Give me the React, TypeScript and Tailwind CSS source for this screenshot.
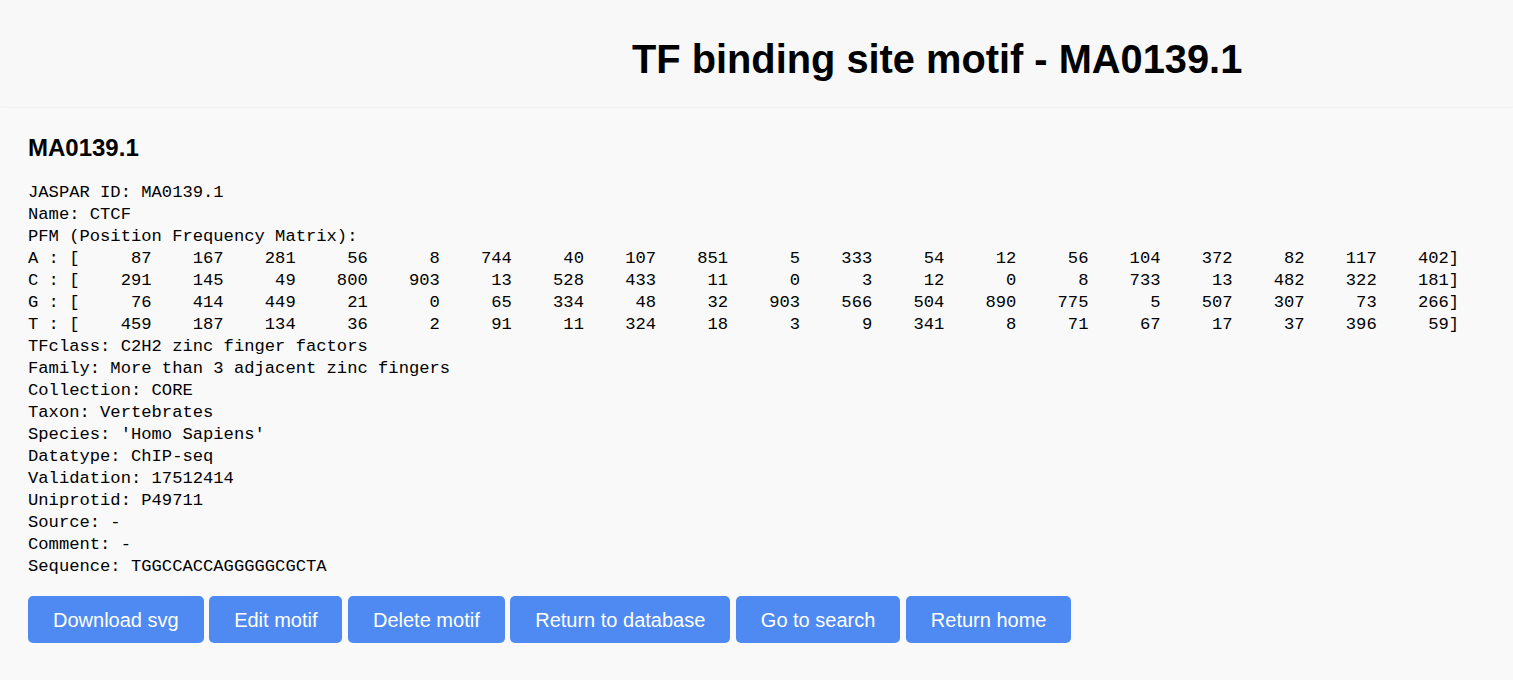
import React from "react";

const rows: [string, number[]][] = [
  ["A", [87, 167, 281, 56, 8, 744, 40, 107, 851, 5, 333, 54, 12, 56, 104, 372, 82, 117, 402]],
  ["C", [291, 145, 49, 800, 903, 13, 528, 433, 11, 0, 3, 12, 0, 8, 733, 13, 482, 322, 181]],
  ["G", [76, 414, 449, 21, 0, 65, 334, 48, 32, 903, 566, 504, 890, 775, 5, 507, 307, 73, 266]],
  ["T", [459, 187, 134, 36, 2, 91, 11, 324, 18, 3, 9, 341, 8, 71, 67, 17, 37, 396, 59]],
];

const before = ["JASPAR ID: MA0139.1", "Name: CTCF", "PFM (Position Frequency Matrix):"];
const after = [
  "TFclass: C2H2 zinc finger factors",
  "Family: More than 3 adjacent zinc fingers",
  "Collection: CORE",
  "Taxon: Vertebrates",
  "Species: 'Homo Sapiens'",
  "Datatype: ChIP-seq",
  "Validation: 17512414",
  "Uniprotid: P49711",
  "Source: -",
  "Comment: -",
  "Sequence: TGGCCACCAGGGGGCGCTA",
];

const buttons = ["Download svg", "Edit motif", "Delete motif", "Return to database", "Go to search", "Return home"];

export default function App() {
  const lines = [
    ...before,
    ...rows.map(([b, nums]) => `${b} : [` + nums.map((n) => String(n).padStart(7)).join("") + "]"),
    ...after,
  ];
  return (
    <div className="min-h-[680px] bg-[#f9f9f9] text-black" style={{ fontFamily: '"Liberation Sans", Arial, sans-serif' }}>
      <header className="bg-[#f8f8f8] h-[108px] pt-[36px] pl-[632px]">
        <h1 className="text-[39.8px] leading-[46px] font-bold font-['Liberation_Sans',Arial,sans-serif]">
          TF binding site motif - MA0139.1
        </h1>
      </header>
      <main className="bg-[#f9f9f9] px-[28px] pt-[26px] pb-[30px] shadow-[0_-1px_2px_rgba(0,0,0,0.03)]">
        <h2 className="text-[24px] leading-[28px] font-bold">MA0139.1</h2>
        <pre className="mt-[20px] font-['Liberation_Mono',monospace] text-[17.17px] leading-[22px] whitespace-pre">
          {lines.join("\n")}
        </pre>
        <div className="mt-[18px] flex gap-[5.5px]">
          {buttons.map((b) => (
            <button
              key={b}
              className="bg-[#4f8af3] text-white text-[20px] leading-[23px] px-[25px] pt-[12.5px] pb-[11.5px] rounded-[5px]"
            >
              {b}
            </button>
          ))}
        </div>
      </main>
    </div>
  );
}
